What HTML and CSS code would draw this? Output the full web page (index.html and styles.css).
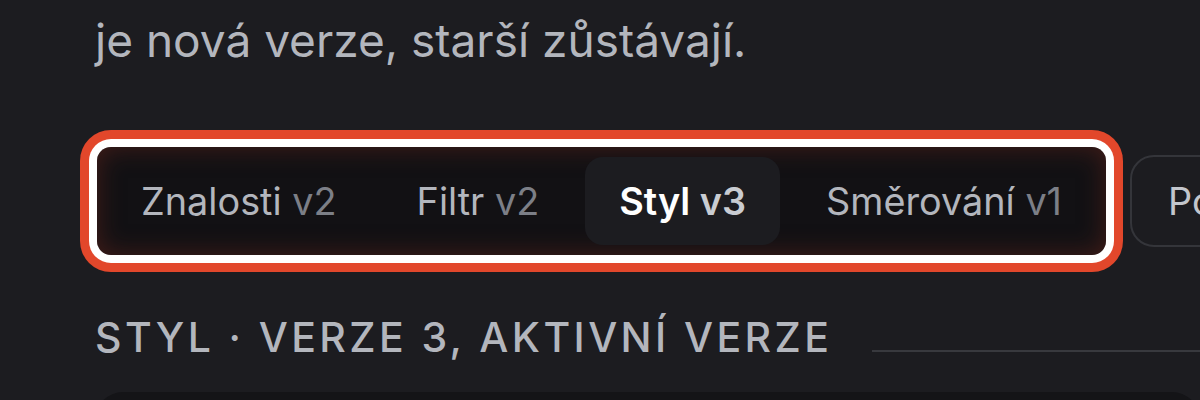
FILE: index.html
```html
<!DOCTYPE html>
<html lang="cs">
<head>
<meta charset="utf-8">
<title>Verze</title>
<link rel="stylesheet" href="styles.css">
</head>
<body>
<main class="page">
  <p class="lead">je nová verze, starší zůstávají.</p>
  <div class="toolbar">
    <div class="tabs" role="tablist">
      <button class="tab"><span class="name">Znalosti</span> <span class="ver">v2</span></button>
      <button class="tab"><span class="name">Filtr</span> <span class="ver">v2</span></button>
      <button class="tab active"><span class="name">Styl</span> <span class="ver">v3</span></button>
      <button class="tab"><span class="name">Směrování</span> <span class="ver">v1</span></button>
    </div>
    <button class="compare">Porovnat</button>
  </div>
  <div class="section-head">
    <h2 class="section-title">Styl · verze 3, aktivní verze</h2>
    <span class="rule"></span>
  </div>
  <div class="card"></div>
</main>
</body>
</html>
```

FILE: styles.css
```css
html, body {
  margin: 0;
  padding: 0;
  background: #1c1c20;
  overflow: hidden;
}

.page {
  font-family: Inter, "Noto Sans", sans-serif;
  padding: 12px 0 0 95px;
  width: 1200px;
  height: 400px;
  box-sizing: border-box;
  overflow: hidden;
}

.lead {
  margin: 0;
  font-size: 46px;
  line-height: 56px;
  color: #b3b6bd;
}

.toolbar {
  display: flex;
  align-items: center;
  gap: 24px;
  margin-top: 79px;
  margin-left: 2px;
  white-space: nowrap;
}

.tabs {
  display: flex;
  gap: 12px;
  padding: 10px;
  background: #121114;
  border-radius: 14px;
  box-shadow:
    inset 0 0 26px rgba(110, 38, 28, 0.55),
    0 0 0 8px #ffffff,
    0 0 0 17px #e2472b;
  flex-shrink: 0;
}

.tab {
  font-family: inherit;
  font-size: 37.8px;
  font-weight: 400;
  color: #b3b6bd;
  background: transparent;
  border: 0;
  border-radius: 18px;
  padding: 21px 34px;
  line-height: 46px;
}

.tab .ver {
  color: #7c7f87;
}

.tab.active {
  background: #1c1c20;
  font-weight: 600;
  color: #ffffff;
}

.tab.active .ver {
  color: #c9ccd2;
}

.compare {
  font-family: inherit;
  font-size: 37.8px;
  color: #c3c6cc;
  background: transparent;
  border: 2px solid #34353a;
  border-radius: 24px;
  padding: 21px 36px;
  line-height: 46px;
  flex-shrink: 0;
}

.section-head {
  display: flex;
  align-items: flex-end;
  gap: 40px;
  margin-top: 57px;
}

.section-title {
  margin: 0;
  font-size: 41px;
  font-weight: 500;
  letter-spacing: 3.4px;
  text-transform: uppercase;
  color: #b3b6bd;
  line-height: 50px;
  white-space: nowrap;
}

.rule {
  flex: 1;
  height: 2px;
  background: #38393e;
  margin-bottom: 10px;
}

.card {
  margin-top: 30px;
  height: 60px;
  background: #141417;
  border-radius: 28px;
}
```
